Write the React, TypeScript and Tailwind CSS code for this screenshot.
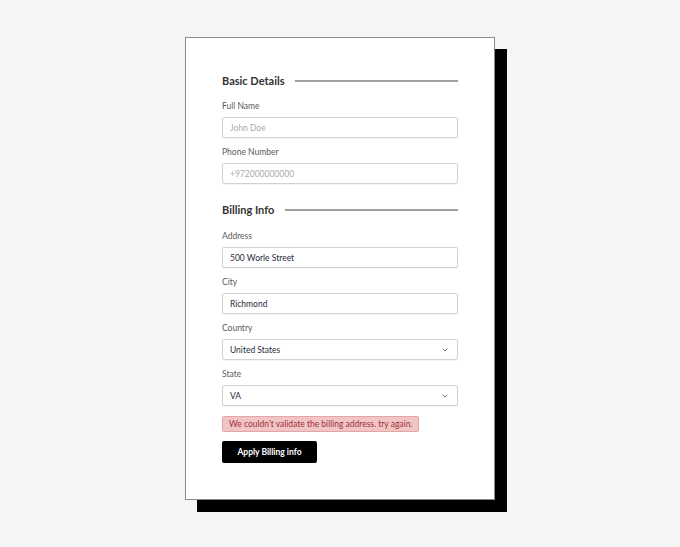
import React from "react";

const Chevron = () => (
  <svg width="6" height="4" viewBox="0 0 6 4" className="absolute right-[9px] top-1/2 -translate-y-1/2" fill="none">
    <path d="M1 1 L3 3 L5 1" stroke="#666" strokeWidth="0.9" strokeLinecap="round" strokeLinejoin="round" />
  </svg>
);

const Heading = ({ text, gap }: { text: string; gap: string }) => (
  <div className={`flex items-center ${gap} h-[14px]`}>
    <span className="text-[11px] font-bold leading-[14px] text-[#333] whitespace-nowrap">{text}</span>
    <div className="flex-1 h-[1.5px] bg-[#a0a0a0]" />
  </div>
);

const Field = ({
  label,
  value,
  placeholder,
  select,
}: {
  label: string;
  value?: string;
  placeholder?: string;
  select?: boolean;
}) => (
  <div className="flex flex-col">
    <div className="text-[8.5px] leading-[12px] text-[#5a5a5a] mb-[5px]">{label}</div>
    <div className="relative h-[21px] border border-[#d2d2d2] rounded-[2px] bg-white flex items-center pl-[7px] shadow-[0_1px_1px_rgba(0,0,0,0.05)]">
      {value ? (
        <span className="text-[8.5px] leading-[12px] text-[#2a2a3a]">{value}</span>
      ) : (
        <span className="text-[8.5px] leading-[12px] text-[#ababab]">{placeholder}</span>
      )}
      {select && <Chevron />}
    </div>
  </div>
);

export default function App() {
  return (
    <div
      className="min-h-screen w-full bg-[#f5f5f5] flex justify-center pt-[37px]"
      style={{ fontFamily: "Lato, 'Noto Sans', sans-serif" }}
    >
      <div className="w-[310px] h-[463px] bg-white border border-[#8a8a8a] shadow-[12px_12px_0_#000] p-[36px] flex flex-col">
        <Heading text="Basic Details" gap="gap-[10px]" />
        <div className="mt-[12px] flex flex-col gap-[8px]">
          <Field label="Full Name" placeholder="John Doe" />
          <Field label="Phone Number" placeholder="+972000000000" />
        </div>
        <div className="mt-[19px]">
          <Heading text="Billing Info" gap="gap-[11px]" />
        </div>
        <div className="mt-[13px] flex flex-col gap-[8px]">
          <Field label="Address" value="500 Worle Street" />
          <Field label="City" value="Richmond" />
          <Field label="Country" value="United States" select />
          <Field label="State" value="VA" select />
        </div>
        <div className="mt-[10px] self-start h-[16px] flex items-center px-[6px] bg-[#f2c5c5] border border-[#e5a5a8] rounded-[2px]">
          <span className="text-[8.5px] leading-[12px] text-[#a03036] whitespace-nowrap">
            We couldn't validate the billing address. try again.
          </span>
        </div>
        <button className="mt-[9px] self-start h-[22px] w-[95px] bg-black rounded-[2px] text-white text-[8.5px] leading-[12px] font-bold flex items-center justify-center">
          Apply Billing info
        </button>
      </div>
    </div>
  );
}
